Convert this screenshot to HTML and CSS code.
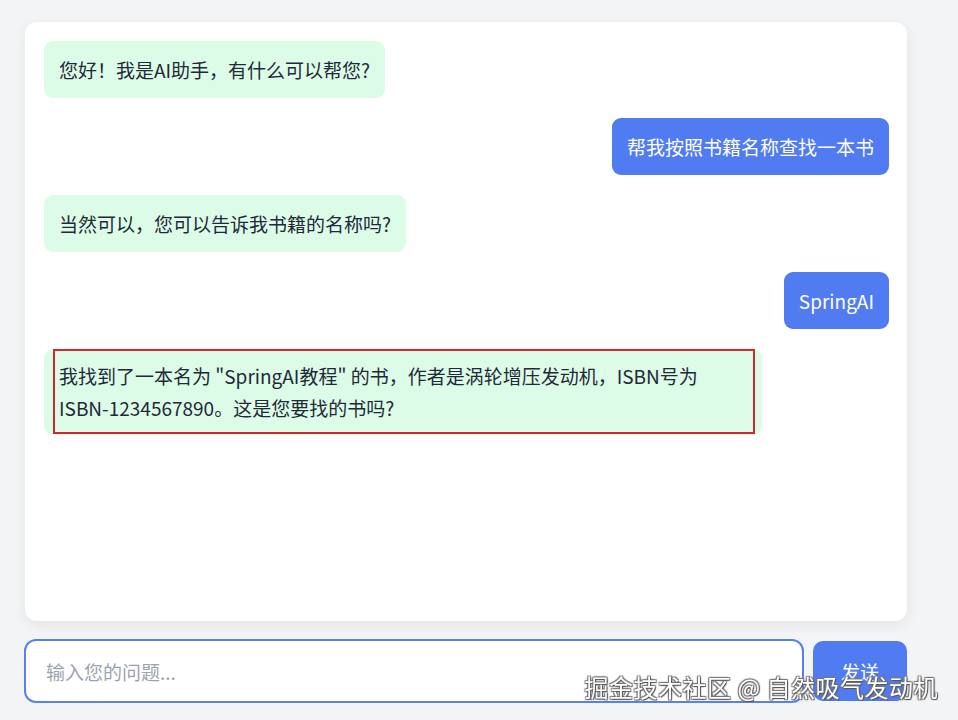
FILE: index.html
```html
<!DOCTYPE html>
<html lang="zh-CN">
<head>
    <meta charset="UTF-8">
    <link rel="stylesheet" href="styles.css">
</head>
<body>
    <div class="app">
        <!-- 对话区域 -->
        <div class="chat-box">
            <div class="message bot">您好！我是AI助手，有什么可以帮您?</div>
            <div class="message user">帮我按照书籍名称查找一本书</div>
            <div class="message bot">当然可以，您可以告诉我书籍的名称吗?</div>
            <div class="message user">SpringAI</div>
            <div class="message bot marked">
                我找到了一本名为 "SpringAI教程" 的书，作者是涡轮增压发动机，ISBN号为 <span class="nowrap">ISBN-1234567890。</span>这是您要找的书吗?
                <span class="mark-box"></span>
            </div>
        </div>

        <!-- 输入区域 -->
        <div class="input-row">
            <input class="chat-input" type="text" placeholder="输入您的问题...">
            <button class="send-button">发送</button>
        </div>
    </div>

    <div class="watermark">掘金技术社区 @ 自然吸气发动机</div>
</body>
</html>
```

FILE: styles.css
```css
body {
    margin: 0;
    padding: 0;
    background: #f3f4f6;
    color: #1f2937;
    font-family: "Noto Sans CJK SC", "Noto Sans", sans-serif;
    min-height: 100vh;
    overflow: hidden;
}

.app {
    display: flex;
    flex-direction: column;
    gap: 18px;
    padding: 22px 51px 0 24px;
}

.chat-box {
    box-sizing: border-box;
    height: 599px;
    margin-left: 1px;
    padding: 19px 18px 19px 19px;
    background: #ffffff;
    border-radius: 12px;
    box-shadow: 0 4px 14px rgba(0, 0, 0, 0.07);
    display: flex;
    flex-direction: column;
    gap: 20px;
}

.message {
    box-sizing: border-box;
    max-width: 85%;
    padding: 12.5px 15px;
    border-radius: 9px;
    font-size: 19px;
    line-height: 32px;
}

.message.bot {
    align-self: flex-start;
    background: #dcfce7;
    color: #1f2937;
}

.message.user {
    align-self: flex-end;
    background: #517bf0;
    color: #ffffff;
}

.message.marked {
    position: relative;
    padding-top: 11px;
    padding-bottom: 11px;
}

.nowrap {
    white-space: nowrap;
}

/* 截图上的红色标注框 */
.mark-box {
    position: absolute;
    top: 0;
    left: 9px;
    right: 7px;
    bottom: 1px;
    border: 2px solid #d1282d;
    pointer-events: none;
}

.input-row {
    display: flex;
    align-items: center;
    gap: 9px;
}

.chat-input {
    flex: 1;
    box-sizing: border-box;
    height: 64px;
    padding: 0 20px;
    border: 2px solid #5a80ee;
    border-radius: 12px;
    background: #ffffff;
    font-family: "Noto Sans CJK SC", "Noto Sans", sans-serif;
    font-size: 19px;
    color: #1f2937;
    outline: none;
}

.chat-input::placeholder {
    color: #9ca3af;
}

.send-button {
    width: 94px;
    height: 60px;
    border: none;
    border-radius: 10px;
    background: #517bf0;
    color: #ffffff;
    font-family: "Noto Sans CJK SC", "Noto Sans", sans-serif;
    font-size: 19px;
    cursor: pointer;
}

.watermark {
    position: fixed;
    right: 20px;
    bottom: 16px;
    font-family: "Noto Sans CJK SC", sans-serif;
    font-size: 24px;
    line-height: 34px;
    color: #ffffff;
    text-shadow: 1px 1px 1px #555, -1px -1px 1px #777, 1px -1px 1px #777, -1px 1px 1px #777;
    letter-spacing: 0.5px;
}
```
